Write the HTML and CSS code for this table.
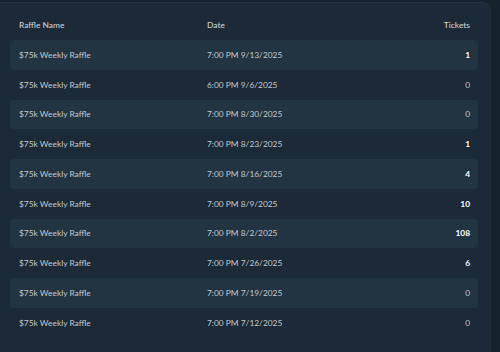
FILE: index.html
```html
<!DOCTYPE html>
<html>
<head>
<meta charset="utf-8">
<link rel="stylesheet" href="styles.css">
</head>
<body>
<div class="page">
  <div class="panel">
    <div class="table">
      <div class="row head">
        <div class="c-name">Raffle Name</div>
        <div class="c-date">Date</div>
        <div class="c-tix">Tickets</div>
      </div>
      <div class="row alt"><div class="c-name">$75k Weekly Raffle</div><div class="c-date">7:00 PM 9/13/2025</div><div class="c-tix strong">1</div></div>
      <div class="row"><div class="c-name">$75k Weekly Raffle</div><div class="c-date">6:00 PM 9/6/2025</div><div class="c-tix">0</div></div>
      <div class="row alt"><div class="c-name">$75k Weekly Raffle</div><div class="c-date">7:00 PM 8/30/2025</div><div class="c-tix">0</div></div>
      <div class="row"><div class="c-name">$75k Weekly Raffle</div><div class="c-date">7:00 PM 8/23/2025</div><div class="c-tix strong">1</div></div>
      <div class="row alt"><div class="c-name">$75k Weekly Raffle</div><div class="c-date">7:00 PM 8/16/2025</div><div class="c-tix strong">4</div></div>
      <div class="row"><div class="c-name">$75k Weekly Raffle</div><div class="c-date">7:00 PM 8/9/2025</div><div class="c-tix strong">10</div></div>
      <div class="row alt"><div class="c-name">$75k Weekly Raffle</div><div class="c-date">7:00 PM 8/2/2025</div><div class="c-tix strong">108</div></div>
      <div class="row"><div class="c-name">$75k Weekly Raffle</div><div class="c-date">7:00 PM 7/26/2025</div><div class="c-tix strong">6</div></div>
      <div class="row alt"><div class="c-name">$75k Weekly Raffle</div><div class="c-date">7:00 PM 7/19/2025</div><div class="c-tix">0</div></div>
      <div class="row"><div class="c-name">$75k Weekly Raffle</div><div class="c-date">7:00 PM 7/12/2025</div><div class="c-tix">0</div></div>
    </div>
  </div>
</div>
</body>
</html>
```
FILE: styles.css
```css
html, body {
  margin: 0;
  padding: 0;
  background: #15222c;
  height: 100%;
  overflow: hidden;
}
.page {
  padding-top: 2px;
  width: 491px;
  height: 100%;
  box-sizing: border-box;
}
.panel {
  background: #1b2a36;
  border-top-right-radius: 8px;
  border-top: 1px solid #213240;
  border-right: 1px solid #1e2e3a;
  height: 100%;
  box-sizing: border-box;
  padding: 0 12px 0 10px;
  font-family: Lato, "Liberation Sans", sans-serif;
  font-size: 8.4px;
  color: #c0c9d1;
}
.row {
  display: grid;
  grid-template-columns: 188px 1fr 80px;
  align-items: center;
  height: 29.75px;
  padding: 0 8px 0 9px;
  border-radius: 4px;
}
.row.head {
  height: 37px;
  padding-top: 7px;
  box-sizing: border-box;
  color: #c8d0d8;
  font-weight: 500;
}
.row.alt {
  background: #223441;
}
.c-tix {
  text-align: right;
}
.strong {
  color: #ffffff;
  font-weight: 700;
}
```
